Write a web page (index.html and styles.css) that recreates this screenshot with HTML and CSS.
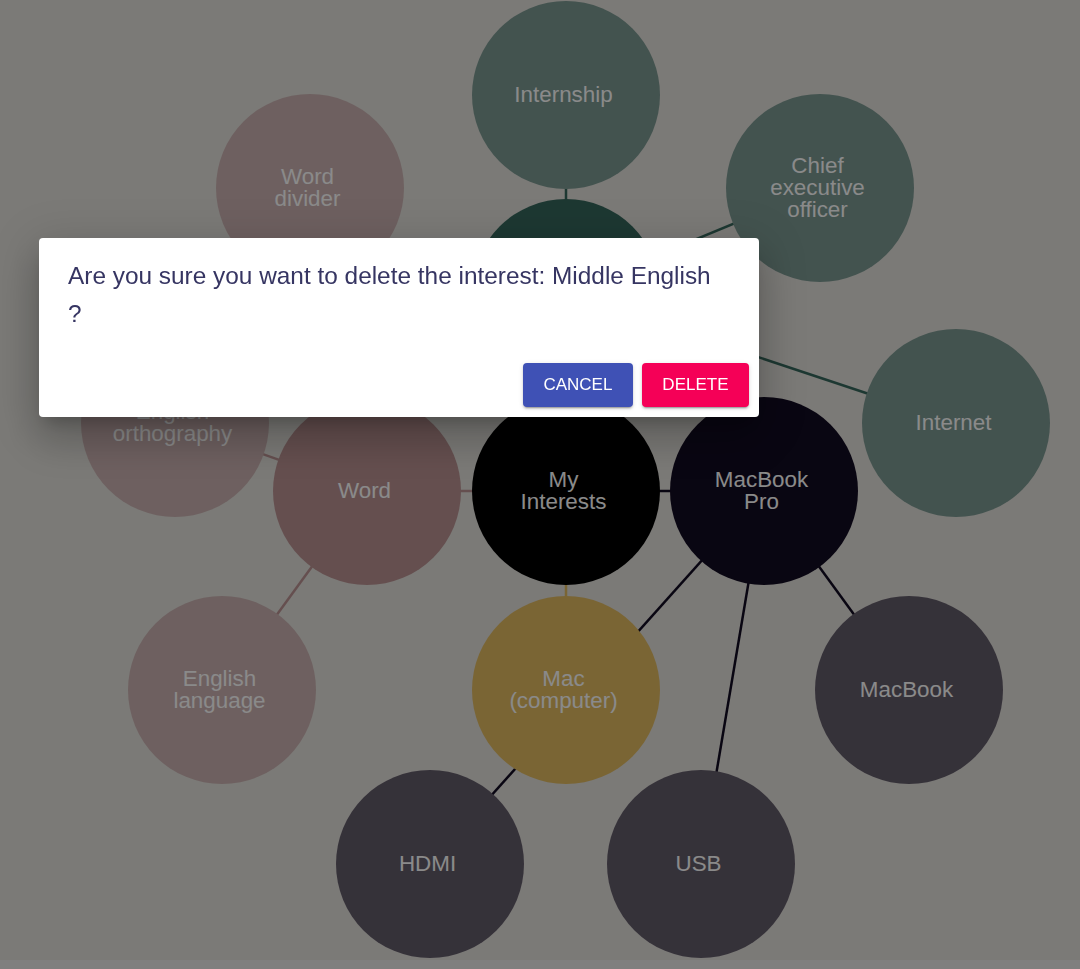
FILE: index.html
```html
<!DOCTYPE html>
<html lang="en">
<head>
<meta charset="utf-8">
<title>My Interests</title>
<link rel="stylesheet" href="styles.css">
</head>
<body>
<main class="graph">
  <svg class="edges" width="1080" height="960" viewBox="0 0 1080 960">
    <line class="e-green" x1="566" y1="293" x2="566" y2="95"/>
    <line class="e-green" x1="566" y1="293" x2="820" y2="188"/>
    <line class="e-green" x1="566" y1="293" x2="956" y2="423"/>
    <line class="e-green" x1="566" y1="293" x2="566" y2="491"/>
    <line class="e-word" x1="367" y1="491" x2="566" y2="491"/>
    <line class="e-word" x1="367" y1="491" x2="175" y2="423"/>
    <line class="e-word" x1="367" y1="491" x2="222" y2="690"/>
    <line class="e-word" x1="367" y1="491" x2="310" y2="188"/>
    <line class="e-mbp" x1="764" y1="491" x2="566" y2="491"/>
    <line class="e-mbp" x1="764" y1="491" x2="909" y2="690"/>
    <line class="e-mbp" x1="764" y1="491" x2="701" y2="864"/>
    <line class="e-mbp" x1="764" y1="491" x2="430" y2="864"/>
    <line class="e-mac" x1="566" y1="491" x2="566" y2="690"/>
  </svg>

  <div class="node c-green" style="left:472px;top:1px"><span>Internship</span></div>
  <div class="node c-rose" style="left:216px;top:94px"><span>Word</span><span>divider</span></div>
  <div class="node c-green" style="left:726px;top:94px"><span>Chief</span><span>executive</span><span>officer</span></div>
  <div class="node c-deep" style="left:472px;top:199px"><span>Middle</span><span>English</span></div>
  <div class="node c-green" style="left:862px;top:329px"><span>Internet</span></div>
  <div class="node c-rose" style="left:81px;top:329px"><span>English</span><span>orthography</span></div>
  <div class="node c-word" style="left:273px;top:397px"><span>Word</span></div>
  <div class="node c-root" style="left:472px;top:397px"><span>My</span><span>Interests</span></div>
  <div class="node c-mbp" style="left:670px;top:397px"><span>MacBook</span><span>Pro</span></div>
  <div class="node c-rose" style="left:128px;top:596px"><span>English</span><span>language</span></div>
  <div class="node c-mac" style="left:472px;top:596px"><span>Mac</span><span>(computer)</span></div>
  <div class="node c-slate" style="left:815px;top:596px"><span>MacBook</span></div>
  <div class="node c-slate" style="left:336px;top:770px"><span>HDMI</span></div>
  <div class="node c-slate" style="left:607px;top:770px"><span>USB</span></div>
</main>

<div class="backdrop"></div>

<section class="dialog" role="dialog" aria-modal="true">
  <p class="dialog-text">Are you sure you want to delete the interest: Middle English ?</p>
  <div class="dialog-actions">
    <button class="btn btn-cancel" type="button">Cancel</button>
    <button class="btn btn-delete" type="button">Delete</button>
  </div>
</section>
</body>
</html>
```
FILE: styles.css
```css
html, body {
  margin: 0;
  padding: 0;
}

body {
  background: #e7e7e7;
  font-family: "Liberation Sans", Arial, sans-serif;
  overflow: hidden;
}

.graph {
  position: relative;
  width: 1080px;
  height: 960px;
  background: #e0ded9;
}

.edges {
  position: absolute;
  left: 0;
  top: 0;
}

.edges line {
  stroke-width: 2.5;
}

.e-green { stroke: #35665b; }
.e-word { stroke: #b89191; }
.e-mbp { stroke: #120b21; }
.e-mac { stroke: #deb860; }

.node {
  position: absolute;
  width: 188px;
  height: 188px;
  box-sizing: border-box;
  padding-right: 5px;
  border-radius: 50%;
  display: flex;
  flex-direction: column;
  align-items: center;
  justify-content: center;
  color: #fbfbfb;
  font-size: 22.4px;
  line-height: 22px;
  text-align: center;
}

.node span {
  display: block;
}

.c-green { background: #7a9790; }
.c-deep { background: #35665b; }
.c-rose { background: #c8b0af; }
.c-word { background: #b89191; }
.c-root { background: #000000; }
.c-mbp { background: #120b21; }
.c-mac { background: #deb860; }
.c-slate { background: #625b69; }

.backdrop {
  position: fixed;
  inset: 0;
  background: rgba(0, 0, 0, 0.45);
}

.dialog {
  position: absolute;
  left: 39px;
  top: 238px;
  width: 720px;
  box-sizing: border-box;
  background: #ffffff;
  border-radius: 4px;
  box-shadow: 0 11px 15px -7px rgba(0, 0, 0, 0.2),
              0 24px 38px 3px rgba(0, 0, 0, 0.14),
              0 9px 46px 8px rgba(0, 0, 0, 0.12);
}

.dialog-text {
  margin: 0;
  padding: 19px 36px 0 29px;
  font-size: 24.4px;
  line-height: 38px;
  color: #363562;
}

.dialog-actions {
  display: flex;
  justify-content: flex-end;
  gap: 9px;
  margin-top: 30px;
  padding: 0 10px 10px;
}

.btn {
  border: 0;
  border-radius: 4px;
  padding: 12px 20.5px;
  font-family: "Liberation Sans", Arial, sans-serif;
  font-size: 17px;
  line-height: 20px;
  text-transform: uppercase;
  color: #ffffff;
  cursor: pointer;
  box-shadow: 0 3px 1px -2px rgba(0, 0, 0, 0.2),
              0 2px 2px 0 rgba(0, 0, 0, 0.14),
              0 1px 5px 0 rgba(0, 0, 0, 0.12);
}

.btn-cancel { background: #3f51b5; }
.btn-delete { background: #f50057; }
```
